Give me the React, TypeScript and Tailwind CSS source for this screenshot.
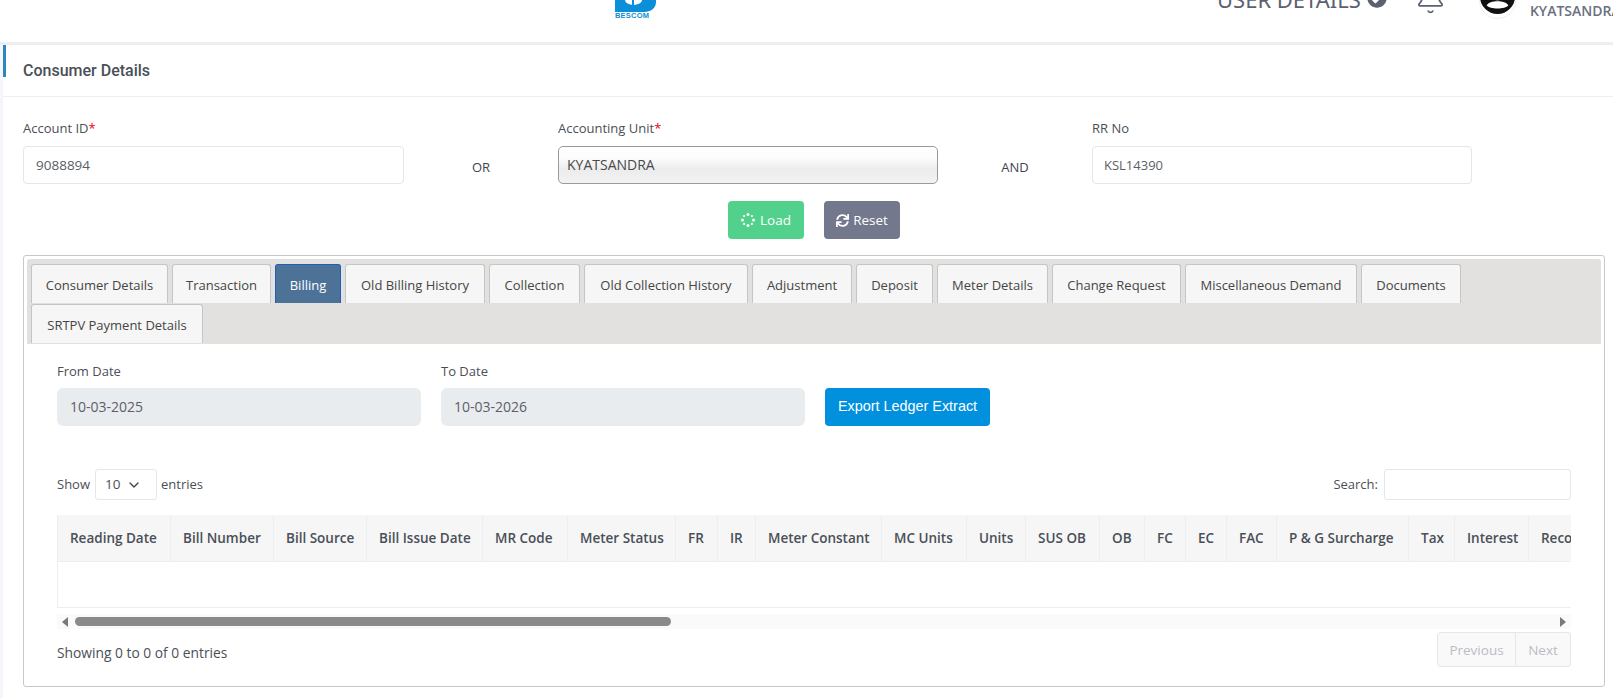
import { Bell, ChevronDown } from "lucide-react";
import { FaSync, FaCheckCircle } from "react-icons/fa";

const tabsRow = [
  ["Consumer Details", "w-[137px]"],
  ["Transaction", "w-[99px]"],
  ["Billing", "w-[66px]"],
  ["Old Billing History", "w-[140px]"],
  ["Collection", "w-[91px]"],
  ["Old Collection History", "w-[164px]"],
  ["Adjustment", "w-[100px]"],
  ["Deposit", "w-[77px]"],
  ["Meter Details", "w-[111px]"],
  ["Change Request", "w-[129px]"],
  ["Miscellaneous Demand", "w-[172px]"],
  ["Documents", "w-[100px]"],
];

const cols = [
  ["Reading Date", "w-[113px]"],
  ["Bill Number", "w-[103px]"],
  ["Bill Source", "w-[93px]"],
  ["Bill Issue Date", "w-[116px]"],
  ["MR Code", "w-[85px]"],
  ["Meter Status", "w-[108px]"],
  ["FR", "w-[42px]"],
  ["IR", "w-[38px]"],
  ["Meter Constant", "w-[126px]"],
  ["MC Units", "w-[85px]"],
  ["Units", "w-[59px]"],
  ["SUS OB", "w-[74px]"],
  ["OB", "w-[45px]"],
  ["FC", "w-[41px]"],
  ["EC", "w-[41px]"],
  ["FAC", "w-[50px]"],
  ["P & G Surcharge", "w-[132px]"],
  ["Tax", "w-[46px]"],
  ["Interest", "w-[74px]"],
  ["Reconnection", "w-[110px]"],
];

function Tab({ label, width, active }: { label: string; width: string; active?: boolean }) {
  return (
    <div
      className={`${width} h-[39px] pt-[3px] mr-[4px] flex items-center justify-center rounded-t-[3px] border border-b-0 text-[13px] whitespace-nowrap ${
        active ? "bg-[#4d7298] border-[#1f5fb4] text-white" : "bg-[#f6f6f6] border-[#c5c5c5] text-[#454545]"
      }`}
    >
      {label}
    </div>
  );
}

function Spinner() {
  const dots = [0, 45, 90, 135, 180, 225, 270, 315];
  return (
    <svg width="14" height="14" viewBox="0 0 14 14" className="mr-[5px]">
      {dots.map((a) => (
        <circle key={a} cx={7 + 5.5 * Math.cos((a * Math.PI) / 180)} cy={7 + 5.5 * Math.sin((a * Math.PI) / 180)} r={a % 90 === 0 ? 1.5 : 1.1} fill="#fff" />
      ))}
    </svg>
  );
}

export default function App() {
  return (
    <div className="w-[1613px] h-[698px] overflow-hidden bg-[#f5f6fb] text-[#4b4f58] text-[13px] font-['Open_Sans','Noto_Sans',sans-serif]">
      <header className="h-[42px] flex overflow-hidden bg-white">
        <div className="ml-[615px] w-[45px] flex flex-col">
          <svg width="41" height="12" viewBox="0 0 41 12" className="block">
            <path d="M0 0H41V2C41 8 36 12 29 12H0Z" fill="#0a8fd8" />
            <path d="M10 0A8.5 5 0 0 0 27 0Z" fill="#fff" />
            <rect x="17" y="0" width="2" height="5" fill="#0a8fd8" />
          </svg>
          <span className="mt-[1px] text-[7.5px] leading-[6px] font-bold text-[#0a8fd8] font-['Liberation_Sans',sans-serif] tracking-[0.2px]">BESCOM</span>
        </div>
        <div className="ml-[561px] -mt-[15px] flex items-start text-[#5c6070] text-[22px] leading-[28px] whitespace-nowrap h-[40px]">
          <span className="font-['Noto_Sans',sans-serif]">USER DETAILS</span>
          <FaCheckCircle className="w-[20px] h-[20px] ml-[6px] mt-[3px] text-[#5c6070]" />
        </div>
        <div className="ml-[28px] -mt-[16px] h-[31px]">
          <Bell className="w-[31px] h-[31px] text-[#5c6070]" strokeWidth={1.4} />
        </div>
        <div className="ml-[33px] -mt-[26px] w-[45px] h-[45px] rounded-full border border-[#eeeeee] flex items-center justify-center">
          <svg width="35" height="35" viewBox="0 0 32 32">
            <circle cx="16" cy="16" r="16" fill="#111" />
            <circle cx="16" cy="13" r="6.5" fill="#fff" />
            <path d="M6 24C9 19 23 19 26 24C23 28 9 28 6 24Z" fill="#fff" />
          </svg>
        </div>
        <div className="ml-[14px] pt-[3px] text-[14px] leading-[16px] font-semibold text-[#6b7080] whitespace-nowrap">KYATSANDRA</div>
      </header>
      <div className="h-[3px] bg-[#eceef2]" />

      <main className="ml-[3px] h-[653px] bg-white relative">
        <div className="absolute left-0 top-0 w-[3px] h-[32px] bg-[#2e86c1]" />
        <div className="h-[52px] flex items-center pl-[20px] border-b border-[#eeeeee] font-['Roboto',sans-serif] text-[16px] font-medium text-[#495057]">
          <span>Consumer Details</span>
        </div>

        <div className="flex pl-[20px] pt-[21px]">
          <div className="w-[381px]">
            <div className="h-[28px] pt-[1px] leading-[18px]">Account ID<span className="text-red-600">*</span></div>
            <div className="h-[38px] pt-[1px] border border-[#e4e6ea] rounded-[4px] flex items-center px-[12px] text-[13.5px] text-[#5a5f68]">9088894</div>
          </div>
          <div className="w-[154px] pt-[34px] h-[66px] flex items-center justify-center text-[#3f444c]">OR</div>
          <div className="w-[380px]">
            <div className="h-[28px] pt-[1px] leading-[18px]">Accounting Unit<span className="text-red-600">*</span></div>
            <div className="h-[38px] pb-[1px] border border-[#9a9a9a] rounded-[5px] flex items-center pl-[8px] text-[14px] text-[#4a4a4a] bg-[linear-gradient(180deg,#ffffff_0%,#fcfcfc_30%,#ececec_62%,#f3f3f3_100%)]">KYATSANDRA</div>
          </div>
          <div className="w-[154px] pt-[34px] h-[66px] flex items-center justify-center text-[#3f444c]">AND</div>
          <div className="w-[380px]">
            <div className="h-[28px] pt-[1px] leading-[18px]">RR No</div>
            <div className="h-[38px] pt-[1px] border border-[#e4e6ea] rounded-[4px] flex items-center px-[11px] text-[13px] text-[#5a5f68]">KSL14390</div>
          </div>
        </div>

        <div className="flex gap-[20px] mt-[17px] pl-[725px]">
          <button className="w-[76px] h-[38px] rounded-[4px] bg-[#52d18c] text-white text-[13.5px] flex items-center justify-center"><Spinner />Load</button>
          <button className="w-[76px] h-[38px] rounded-[4px] bg-[#74788d] text-white text-[13.5px] flex items-center justify-center"><FaSync className="w-[13px] h-[13px] mr-[4px]" />Reset</button>
        </div>

        <section className="ml-[20px] mr-[8px] mt-[16px] h-[432px] border border-[#c8c8c8] rounded-[3px] p-[3px]">
          <div className="h-[85px] bg-[#e3e0e0] rounded-t-[3px] pl-[4px] pt-[5px]">
            <div className="flex">
              {tabsRow.map(([l, w]) => (
                <Tab key={l} label={l} width={w} active={l === "Billing"} />
              ))}
            </div>
            <div className="flex mt-[1px]">
              <Tab label="SRTPV Payment Details" width="w-[172px]" />
            </div>
          </div>

          <div className="px-[30px]">
            <div className="flex mt-[16px]">
              <div className="w-[364px]">
                <div className="h-[28px] pt-[2px] leading-[18px] text-[#4b4f58]">From Date</div>
                <div className="h-[38px] pb-[1px] rounded-[6px] bg-[#e9ecef] flex items-center px-[13px] text-[14px] text-[#5a5f68]">10-03-2025</div>
              </div>
              <div className="w-[364px] ml-[20px]">
                <div className="h-[28px] pt-[2px] leading-[18px] text-[#4b4f58]">To Date</div>
                <div className="h-[38px] pb-[1px] rounded-[6px] bg-[#e9ecef] flex items-center px-[13px] text-[14px] text-[#5a5f68]">10-03-2026</div>
              </div>
              <button className="ml-[20px] mt-[28px] w-[165px] h-[38px] rounded-[4px] bg-[#0090de] text-white text-[14.4px] font-['Liberation_Sans',sans-serif]">Export Ledger Extract</button>
            </div>

            <div className="flex items-center justify-between mt-[43px] h-[31px]">
              <div className="flex items-center">
                <span>Show</span>
                <div className="ml-[5px] mr-[4px] w-[62px] h-[31px] border border-[#e4e6ea] rounded-[3px] flex items-center pl-[9px] pr-[14px] justify-between text-[13.5px]">
                  <span>10</span>
                  <ChevronDown className="w-[16px] h-[16px] text-[#444]" />
                </div>
                <span>entries</span>
              </div>
              <div className="flex items-center">
                <span className="mr-[6px]">Search:</span>
                <div className="w-[187px] h-[31px] border border-[#e4e6ea] rounded-[3px]" />
              </div>
            </div>

            <div className="mt-[15px] w-[1514px] overflow-hidden">
              <div className="w-max">
                <div className="flex h-[47px] bg-[#f6f6f6] border-b border-[#eeeeee] font-semibold text-[13.5px] text-[#4a4f58]">
                  {cols.map(([l, w]) => (
                    <div key={l} className={`${w} shrink-0 flex items-center pl-[12px] border-l border-[#eeeeee] whitespace-nowrap`}>{l}</div>
                  ))}
                </div>
              </div>
              <div className="h-[46px] border-b border-l border-[#eeeeee]" />
            </div>

            <div className="mt-[6px] h-[15px] w-[1514px] bg-[#fafafa] flex items-center">
              <svg width="8" height="10" viewBox="0 0 8 10" className="ml-[4px]"><path d="M7 0V10L1 5Z" fill="#7a7a7a" /></svg>
              <div className="ml-[6px] w-[596px] h-[9px] rounded-full bg-[#8a8a8a]" />
              <svg width="8" height="10" viewBox="0 0 8 10" className="ml-auto mr-[4px]"><path d="M1 0V10L7 5Z" fill="#7a7a7a" /></svg>
            </div>

            <div className="flex justify-between w-[1514px] h-[35px] mt-[3px]">
              <div className="mt-[12px] leading-[18px] text-[13.8px]">Showing 0 to 0 of 0 entries</div>
              <div className="flex text-[#b9bcc2] text-[13.5px]">
                <div className="w-[79px] h-[35px] pt-[1px] border border-[#e4e6ea] rounded-l-[4px] bg-[#f9f9fa] flex items-center justify-center">Previous</div>
                <div className="w-[55px] h-[35px] pt-[1px] border border-l-0 border-[#e4e6ea] rounded-r-[4px] bg-[#f9f9fa] flex items-center justify-center">Next</div>
              </div>
            </div>
          </div>
        </section>
      </main>
    </div>
  );
}
